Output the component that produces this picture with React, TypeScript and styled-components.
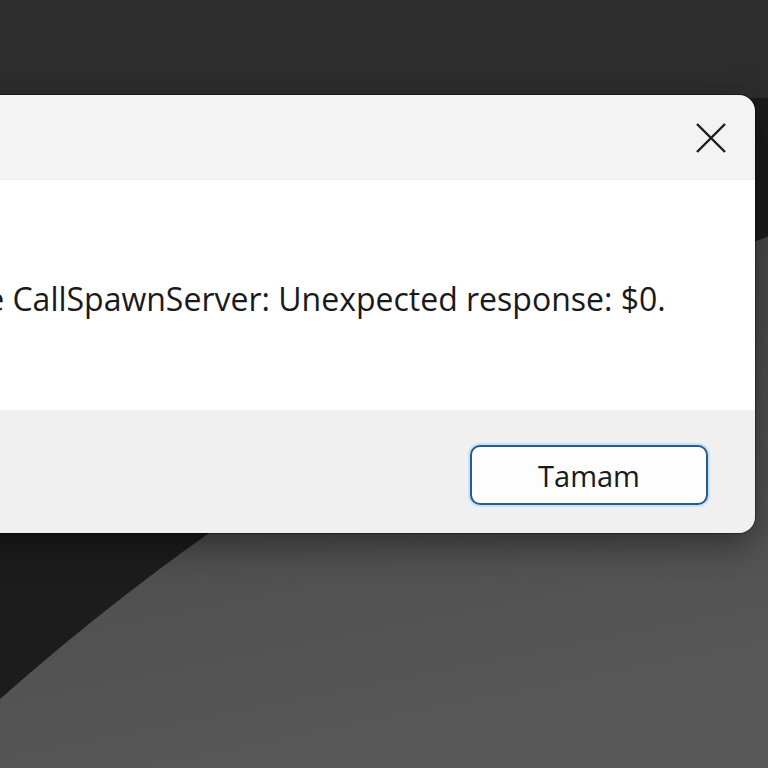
import React from 'react'
import styled, { createGlobalStyle } from 'styled-components'

const GlobalStyle = createGlobalStyle`
  html, body {
    margin: 0;
    padding: 0;
    height: 100%;
    overflow: hidden;
    background: #2f2f2f;
  }
  body {
    font-family: "Open Sans", "Noto Sans", sans-serif;
  }
`

const Wallpaper = () => (
    <WallpaperSvg viewBox="0 0 768 768" preserveAspectRatio="none">
        <defs>
            <linearGradient id="topFill" x1="0" y1="0" x2="0" y2="1">
                <stop offset="0" stopColor="#2d2d2d" />
                <stop offset="1" stopColor="#323232" />
            </linearGradient>
            <linearGradient id="lightFill" x1="0" y1="0" x2="0.3" y2="1">
                <stop offset="0" stopColor="#434343" />
                <stop offset="1" stopColor="#575757" />
            </linearGradient>
        </defs>
        <rect x="0" y="0" width="768" height="768" fill="url(#topFill)" />
        <rect x="0" y="98" width="768" height="670" fill="#1c1c1c" />
        <path d="M -20 717 Q 330 400 780 232 L 780 768 L -20 768 Z" fill="url(#lightFill)" />
    </WallpaperSvg>
)

const Page = () => (
    <Screen>
        <Wallpaper />
        <Dialog>
            <TitleBar>
                <CloseButton aria-label="Kapat">
                    <svg width="30" height="30" viewBox="0 0 30 30">
                        <path d="M1 1 L29 29 M29 1 L1 29" stroke="#1b1b1b" strokeWidth="2.4" fill="none" />
                    </svg>
                </CloseButton>
            </TitleBar>
            <Body>
                <Message>Failure CallSpawnServer: Unexpected response: $0.</Message>
            </Body>
            <Footer>
                <Button>Tamam</Button>
            </Footer>
        </Dialog>
    </Screen>
)

export default function App() {
    return (
        <>
            <GlobalStyle />
            <Page />
        </>
    )
}

const WallpaperSvg = styled.svg`
    position: fixed;
    inset: 0;
    width: 100%;
    height: 100%;
    z-index: 0;
`

const Screen = styled.div`
    position: relative;
    min-height: 100vh;
    display: flex;
    flex-direction: column;
    align-items: flex-end;
    padding: 95px 13px 0 0;
    box-sizing: border-box;
`

const Dialog = styled.div`
    position: relative;
    z-index: 1;
    width: 1000px;
    flex-shrink: 0;
    display: flex;
    flex-direction: column;
    border-radius: 16px;
    overflow: hidden;
    box-shadow: 0 0 0 1px rgba(0, 0, 0, 0.35), 0 10px 36px rgba(0, 0, 0, 0.45);
`

const TitleBar = styled.div`
    height: 85px;
    background: #f3f3f3;
    display: flex;
    justify-content: flex-end;
    border-bottom: 1px solid #ececec;
    box-sizing: border-box;
`

const CloseButton = styled.button`
    width: 88px;
    height: 85px;
    border: none;
    background: transparent;
    padding: 0;
    display: flex;
    align-items: center;
    justify-content: center;
`

const Body = styled.div`
    height: 230px;
    background: #ffffff;
    display: flex;
    align-items: center;
    padding: 8px 0 0 148px;
    box-sizing: border-box;
`

const Message = styled.p`
    margin: 0;
    font-size: 32px;
    line-height: 44px;
    color: #1a1a1a;
    white-space: nowrap;
`

const Footer = styled.div`
    height: 123px;
    background: #f0f0f0;
    display: flex;
    justify-content: flex-end;
    align-items: flex-start;
    padding: 35px 47px 0 0;
    box-sizing: border-box;
`

const Button = styled.button`
    width: 238px;
    height: 60px;
    box-sizing: border-box;
    border: 2px solid #2a5a8c;
    border-radius: 10px;
    background: #fdfdfd;
    box-shadow: 0 0 0 2px #c4e4fb;
    font-family: "Open Sans", "Noto Sans", sans-serif;
    font-size: 29px;
    color: #1a1a1a;
    padding: 0;
`
